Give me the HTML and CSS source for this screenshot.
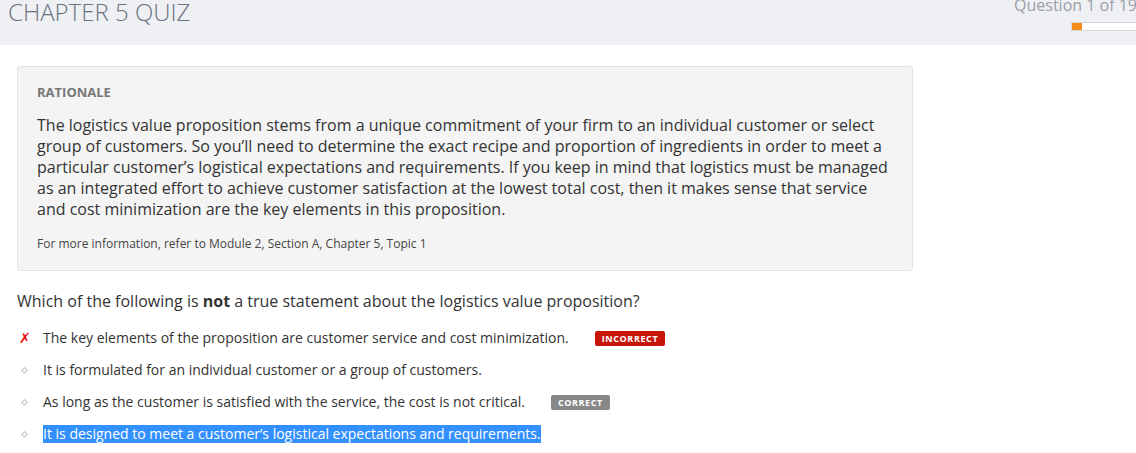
FILE: index.html
```html
<!DOCTYPE html>
<html>
<head>
<meta charset="utf-8">
<link rel="stylesheet" href="styles.css">
</head>
<body>
<header class="topbar">
  <h1 class="title">CHAPTER 5 QUIZ</h1>
  <div class="progress-wrap">
    <div class="qcount">Question 1 of 19</div>
    <div class="progress"><div class="progress-fill" style="width:10px"></div></div>
  </div>
</header>
<main class="content">
  <section class="rationale">
    <h2 class="rationale-head">RATIONALE</h2>
    <p class="rationale-text">The logistics value proposition stems from a unique commitment of your firm to an individual customer or select group of customers. So you’ll need to determine the exact recipe and proportion of ingredients in order to meet a particular customer’s logistical expectations and requirements. If you keep in mind that logistics must be managed as an integrated effort to achieve customer satisfaction at the lowest total cost, then it makes sense that service and cost minimization are the key elements in this proposition.</p>
    <p class="rationale-ref">For more information, refer to Module 2, Section A, Chapter 5, Topic 1</p>
  </section>
  <p class="question">Which of the following is <b>not</b> a true statement about the logistics value proposition?</p>
  <ul class="options">
    <li class="option"><span class="mark mark-x">✗</span><span class="opt-text">The key elements of the proposition are customer service and cost minimization.</span><span class="badge badge-incorrect">INCORRECT</span></li>
    <li class="option"><span class="mark mark-dot"></span><span class="opt-text">It is formulated for an individual customer or a group of customers.</span></li>
    <li class="option"><span class="mark mark-dot"></span><span class="opt-text">As long as the customer is satisfied with the service, the cost is not critical.</span><span class="badge badge-correct">CORRECT</span></li>
    <li class="option"><span class="mark mark-dot"></span><span class="opt-text selected">It is designed to meet a customer’s logistical expectations and requirements.</span></li>
  </ul>
</main>
</body>
</html>
```
FILE: styles.css
```css
html, body {
  margin: 0;
  padding: 0;
  background: #ffffff;
  font-family: "Open Sans", "Liberation Sans", sans-serif;
  color: #333;
  overflow: hidden;
}
.topbar {
  height: 45px;
  background: #eff0f4;
  display: flex;
  justify-content: space-between;
  align-items: flex-start;
}
.title {
  margin: 0;
  padding-left: 8px;
  font-weight: 300;
  font-size: 24px;
  line-height: 24px;
  color: #6a7280;
}
.progress-wrap {
  display: flex;
  flex-direction: column;
  align-items: flex-end;
  margin-right: -1px;
}
.qcount {
  font-size: 16px;
  line-height: 14px;
  margin-top: -2px;
  color: #9a9ea6;
}
.progress {
  margin-top: 10px;
  width: 64px;
  height: 7px;
  background: #fff;
  border: 1px solid #d6d6d6;
  display: flex;
}
.progress-fill {
  background: #f48c1a;
  height: 100%;
}
.content {
  padding: 21px 0 0 17px;
  width: 896px;
}
.rationale {
  background: #f4f4f4;
  border: 1px solid #e2e2e2;
  border-radius: 3px;
  padding: 17px 19px 18px 19px;
}
.rationale-head {
  margin: 0;
  font-size: 13px;
  line-height: 16px;
  font-weight: 700;
  color: #777;
}
.rationale-text {
  margin: 15px 0 0;
  font-size: 16px;
  line-height: 21px;
  color: #333;
}
.rationale-ref {
  margin: 16px 0 0;
  font-size: 12px;
  line-height: 16px;
  color: #444;
}
.question {
  margin: 19px 0 0;
  font-size: 16px;
  line-height: 22px;
  color: #333;
}
.question b { font-weight: 700; }
.options {
  list-style: none;
  margin: 10px 0 0;
  padding: 0;
}
.option {
  display: flex;
  align-items: center;
  height: 32px;
}
.mark {
  width: 26px;
  display: flex;
  align-items: center;
  padding-left: 2px;
  box-sizing: border-box;
}
.mark-x {
  color: #e81010;
  font-size: 14px;
  font-weight: 700;
  font-family: "DejaVu Sans", sans-serif;
}
.mark-dot::before {
  content: "";
  width: 3px;
  height: 3px;
  margin-left: 3px;
  border: 1px solid #c4c4c4;
  transform: rotate(45deg);
  display: block;
}
.opt-text {
  color: #333;
  line-height: 18px;
  font-size: 14px;
}
.selected {
  background: #3390ff;
  color: #fff;
}
.badge {
  margin-left: 26px;
  font-size: 9px;
  font-weight: 700;
  letter-spacing: 0.6px;
  color: #fff;
  border-radius: 2px;
  padding: 1px 7px;
  line-height: 13px;
}
.badge-incorrect { background: #c8150b; }
.badge-correct { background: #888; }
```
